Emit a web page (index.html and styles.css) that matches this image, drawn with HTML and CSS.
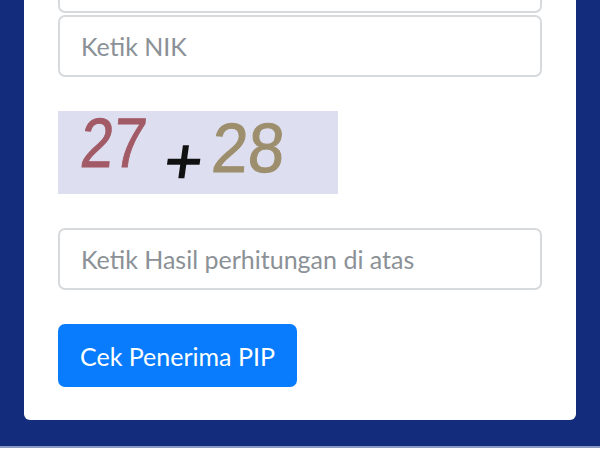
FILE: index.html
```html
<!doctype html>
<html lang="id">
<head>
    <meta charset="UTF-8">
    <meta name="viewport" content="width=device-width, initial-scale=1.0">
    <title>Cek Penerima PIP</title>
    <link rel="stylesheet" href="styles.css">
</head>
<body>
<div class="page">
    <div class="card">
        <form class="form">
            <div class="fields">
                <input class="form-control" type="text" placeholder="Ketik Nama">
                <input class="form-control" type="text" placeholder="Ketik NIK">
            </div>
            <div class="captcha">
                <span class="num a">27</span>
                <span class="plus">+</span>
                <span class="num b">28</span>
            </div>
            <input class="form-control" type="text" placeholder="Ketik Hasil perhitungan di atas">
            <div>
                <button class="btn" type="button">Cek Penerima PIP</button>
            </div>
        </form>
    </div>
</div>
<div class="footer-line"></div>
</body>
</html>
```

FILE: styles.css
```css
*{
    padding: 0;
    margin: 0;
    box-sizing: border-box;
}
html, body{
    height: 100%;
    overflow: hidden;
}
body{
    background-color: #142c7c;
    font-family: Lato, "Noto Sans", sans-serif;
    display: flex;
    flex-direction: column;
}
.page{
    flex: 1;
    padding: 0 24px;
}
.card{
    background-color: #fff;
    border-radius: 0 0 6px 6px;
    margin-top: -49px;
    padding: 0 34px 33px;
}
.form{
    display: flex;
    flex-direction: column;
    gap: 34px;
}
.fields{
    display: flex;
    flex-direction: column;
    gap: 2px;
}
.form-control{
    display: block;
    width: 100%;
    height: 62px;
    padding: 0 21px;
    font-family: inherit;
    font-size: 25px;
    color: #495057;
    background: #fff;
    border: 2px solid #d7dadd;
    border-radius: 7px;
    outline: none;
}
.form-control::placeholder{
    color: #8b9196;
}
/* captcha gambar: angka miring dengan warna pudar */
.captcha{
    width: 280px;
    height: 83px;
    background-color: #dddef0;
    display: flex;
    align-items: center;
    padding-left: 23px;
    font-family: "Liberation Sans", sans-serif;
    line-height: 1;
}
.num{
    display: inline-block;
    font-size: 70px;
    transform-origin: left center;
    -webkit-text-stroke: 1px currentColor;
}
.num.a{
    color: #a25b66;
    width: 68px;
    transform: translateY(-10px) scaleX(.84) skewX(-6deg);
}
.num.b{
    color: #9d8f6d;
    width: 74px;
    transform: translateY(-5px) scaleX(.93) skewX(-4deg);
}
.plus{
    display: inline-block;
    font-size: 64px;
    color: #111;
    margin: 0 10px 0 16px;
    -webkit-text-stroke: 1.5px currentColor;
    transform: translateY(8px) skewX(-8deg);
}
.btn{
    height: 63px;
    padding: 0 22px;
    font-family: inherit;
    font-size: 25px;
    color: #fff;
    background-color: #087cfc;
    border: none;
    border-radius: 7px;
}
.footer-line{
    height: 4px;
    margin-top: 26px;
    border-top: 2px solid #8c9bc4;
    background-color: #fff;
}
```
